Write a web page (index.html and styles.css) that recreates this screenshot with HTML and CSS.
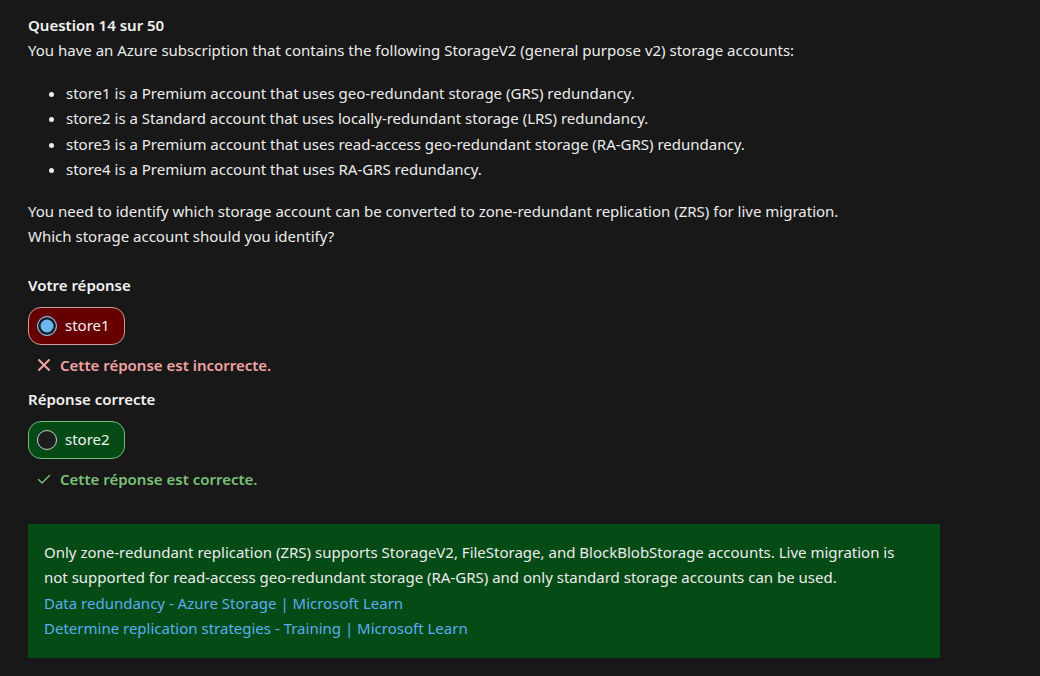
FILE: index.html
```html
<!DOCTYPE html>
<html lang="fr">
<head>
<meta charset="utf-8">
<link rel="stylesheet" href="styles.css">
</head>
<body>
<main class="quiz">
  <h1 class="q-title">Question 14 sur 50</h1>
  <p class="q-text">You have an Azure subscription that contains the following StorageV2 (general purpose v2) storage accounts:</p>
  <ul class="q-list">
    <li>store1 is a Premium account that uses geo-redundant storage (GRS) redundancy.</li>
    <li>store2 is a Standard account that uses locally-redundant storage (LRS) redundancy.</li>
    <li>store3 is a Premium account that uses read-access geo-redundant storage (RA-GRS) redundancy.</li>
    <li>store4 is a Premium account that uses RA-GRS redundancy.</li>
  </ul>
  <p class="q-text q-need">You need to identify which storage account can be converted to zone-redundant replication (ZRS) for live migration.<br>Which storage account should you identify?</p>

  <h2 class="label label-first">Votre réponse</h2>
  <div class="pill pill-wrong">
    <span class="radio radio-checked"></span>
    <span class="pill-text">store1</span>
  </div>
  <div class="verdict verdict-wrong">
    <svg class="v-icon" viewBox="0 0 14 14" width="14" height="14"><path d="M2 2 L12 12 M12 2 L2 12" stroke="currentColor" stroke-width="2" stroke-linecap="round" fill="none"/></svg>
    <span>Cette réponse est incorrecte.</span>
  </div>

  <h2 class="label">Réponse correcte</h2>
  <div class="pill pill-right">
    <span class="radio"></span>
    <span class="pill-text">store2</span>
  </div>
  <div class="verdict verdict-right">
    <svg class="v-icon" viewBox="0 0 14 14" width="14" height="14"><path d="M1.5 7.5 L5 11 L12.5 3.5" stroke="currentColor" stroke-width="1.4" stroke-linecap="round" stroke-linejoin="round" fill="none"/></svg>
    <span>Cette réponse est correcte.</span>
  </div>

  <section class="explain">
    <p>Only zone-redundant replication (ZRS) supports StorageV2, FileStorage, and BlockBlobStorage accounts. Live migration is not supported for read-access geo-redundant storage (RA-GRS) and only standard storage accounts can be used.</p>
    <a href="#" class="ref">Data redundancy - Azure Storage | Microsoft Learn</a>
    <a href="#" class="ref">Determine replication strategies - Training | Microsoft Learn</a>
  </section>
</main>
</body>
</html>
```
FILE: styles.css
```css
html, body {
  margin: 0;
  padding: 0;
  background: #181818;
}
body {
  font-family: "Noto Sans", "Open Sans", sans-serif;
  font-size: 15px;
  line-height: 25.5px;
  color: #ececec;
}
.quiz {
  padding: 13px 28px 0 28px;
  width: 912px;
}
.q-title {
  font-size: 15px;
  font-weight: 600;
  margin: 0;
  line-height: 25px;
  color: #f2f2f2;
}
.q-text {
  margin: 0;
}
.q-list {
  margin: 17px 0 16px 0;
  padding-left: 38px;
}
.q-list li {
  line-height: 25.5px;
}
.q-need {
  margin-bottom: 23px;
}
.label {
  font-size: 15px;
  font-weight: 600;
  margin: 0 0 10px 0;
  line-height: 24px;
  color: #f2f2f2;
}
.pill {
  display: inline-flex;
  align-items: center;
  gap: 8px;
  height: 38px;
  box-sizing: border-box;
  padding: 0 14px 0 8px;
  border-radius: 13px;
  border: 1px solid;
}
.pill-wrong {
  background: #660000;
  border-color: #d49a9a;
}
.pill-right {
  background: #054b16;
  border-color: #78b878;
}
.radio {
  width: 20px;
  height: 20px;
  box-sizing: border-box;
  border-radius: 50%;
  border: 1.5px solid #cfcfcf;
  background: #1c1c1c;
}
.radio-checked {
  border-color: #86c2ee;
  background: #6cb8ee;
  box-shadow: inset 0 0 0 2.5px #1c1c1c;
}
.pill-text {
  color: #f2f2f2;
}
.verdict {
  display: flex;
  align-items: center;
  gap: 9px;
  font-weight: 600;
  padding-left: 9px;
  margin: 8px 0 9px 0;
  line-height: 25px;
}
.verdict-wrong { color: #f1a3a3; }
.verdict-right { color: #79c079; }
.v-icon { flex: none; }
.explain {
  margin-top: 32px;
  background: #054b16;
  padding: 16px 30px 16px 16px;
  display: flex;
  flex-direction: column;
  align-items: flex-start;
}
.explain p {
  margin: 0;
}
.ref {
  color: #5cadf0;
  text-decoration: none;
}
```
